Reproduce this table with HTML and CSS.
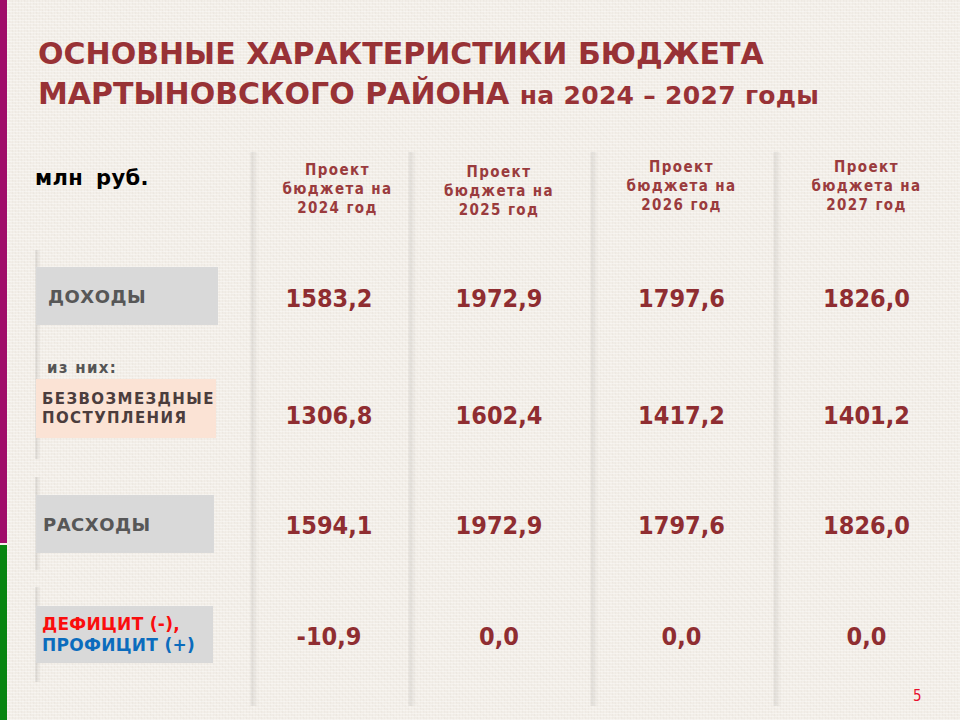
FILE: index.html
```html
<!DOCTYPE html>
<html lang="ru">
<head>
<meta charset="utf-8">
<title>Основные характеристики бюджета</title>
<link rel="stylesheet" href="styles.css">
</head>
<body>
<div class="slide">
  <div class="sidebar">
    <div class="bar-top"></div>
    <div class="bar-gap"></div>
    <div class="bar-bottom"></div>
  </div>
  <main class="main">
    <h1 class="title">ОСНОВНЫЕ ХАРАКТЕРИСТИКИ БЮДЖЕТА<br>МАРТЫНОВСКОГО РАЙОНА <span class="title-small">на 2024 – 2027 годы</span></h1>
    <div class="table">
      <div class="labels">
        <div class="unit">млн руб.</div>
        <div class="group group-income">
          <div class="box box-gray box-income"><span>ДОХОДЫ</span></div>
          <div class="sub">из них:</div>
          <div class="box box-peach"><span>БЕЗВОЗМЕЗДНЫЕ<br>ПОСТУПЛЕНИЯ</span></div>
        </div>
        <div class="group group-exp">
          <div class="box box-gray box-exp"><span>РАСХОДЫ</span></div>
        </div>
        <div class="group group-def">
          <div class="box box-gray box-def">
            <span class="red">ДЕФИЦИТ (-),</span>
            <span class="blue">ПРОФИЦИТ (+)</span>
          </div>
        </div>
      </div>
      <div class="col col-1">
        <div class="head head-1">Проект<br>бюджета на<br>2024 год</div>
        <div class="val r1">1583,2</div>
        <div class="val r2">1306,8</div>
        <div class="val r3">1594,1</div>
        <div class="val r4">-10,9</div>
      </div>
      <div class="col col-2">
        <div class="head head-2">Проект<br>бюджета на<br>2025 год</div>
        <div class="val r1">1972,9</div>
        <div class="val r2">1602,4</div>
        <div class="val r3">1972,9</div>
        <div class="val r4">0,0</div>
      </div>
      <div class="col col-3">
        <div class="head head-3">Проект<br>бюджета на<br>2026 год</div>
        <div class="val r1">1797,6</div>
        <div class="val r2">1417,2</div>
        <div class="val r3">1797,6</div>
        <div class="val r4">0,0</div>
      </div>
      <div class="col col-4">
        <div class="head head-3">Проект<br>бюджета на<br>2027 год</div>
        <div class="val r1">1826,0</div>
        <div class="val r2">1401,2</div>
        <div class="val r3">1826,0</div>
        <div class="val r4">0,0</div>
      </div>
    </div>
  </main>
  <div class="page-num">5</div>
</div>
</body>
</html>
```

FILE: styles.css
```css
* { box-sizing: border-box; }

html, body {
  margin: 0;
  padding: 0;
}

body {
  width: 960px;
  height: 720px;
  overflow: hidden;
  font-family: "DejaVu Sans", Verdana, sans-serif;
  background-color: #f3efe9;
  background-image:
    repeating-linear-gradient(0deg, rgba(255,255,255,0.35) 0 1px, rgba(255,255,255,0) 1px 3px),
    repeating-linear-gradient(90deg, rgba(120,100,80,0.035) 0 1px, rgba(0,0,0,0) 1px 3px),
    repeating-linear-gradient(45deg, rgba(150,130,110,0.02) 0 2px, rgba(0,0,0,0) 2px 5px);
}

.slide {
  position: relative;
  display: flex;
  width: 960px;
  height: 720px;
}

.sidebar {
  width: 7px;
  height: 720px;
  display: flex;
  flex-direction: column;
  flex-shrink: 0;
}

.bar-top { height: 543px; background: #a00c69; }
.bar-gap { height: 2px; background: #f4efe9; }
.bar-bottom { flex: 1; background: #078410; }

.main {
  flex: 1;
  padding-left: 28px;
}

.title {
  margin: 0 0 0 3px;
  padding-top: 34px;
  font-family: "DejaVu Sans", Verdana, sans-serif;
  font-weight: bold;
  font-size: 30px;
  line-height: 40px;
  color: #983236;
  white-space: nowrap;
}

.title-small {
  font-size: 25px;
  letter-spacing: 0.3px;
}

.table {
  display: flex;
  margin-top: 36px;
}

/* label column */
.labels {
  width: 215px;
  display: flex;
  flex-direction: column;
}

.unit {
  height: 98px;
  padding-top: 14px;
  font-family: "DejaVu Sans", Verdana, sans-serif;
  font-weight: bold;
  font-size: 21px;
  letter-spacing: 0.4px;
  word-spacing: 5px;
  color: #000;
}

.group {
  padding-left: 1px;
  background-image: linear-gradient(to right, rgba(0,0,0,0.03) 0, rgba(0,0,0,0.1) 1px, rgba(0,0,0,0.05) 3px, rgba(0,0,0,0) 6px);
}

.group-income { height: 209px; padding-top: 17px; }
.group-exp { height: 93px; margin-top: 18px; padding-top: 18px; }
.group-def { height: 95px; margin-top: 17px; padding-top: 19px; }

.box {
  display: flex;
  align-items: center;
  font-family: "DejaVu Sans", Verdana, sans-serif;
  font-weight: bold;
}

.box-gray { background: #d9d9d9; }
.box-peach { background: #fbe3d5; }

.box-income {
  width: 182px;
  height: 58px;
  padding-left: 12px;
  font-size: 18px;
  letter-spacing: 0.5px;
  color: #575757;
}

.sub {
  height: 54px;
  padding-top: 34px;
  padding-left: 11px;
  font-size: 15px;
  line-height: 18px;
  letter-spacing: 1.3px;
  font-weight: bold;
  color: #555;
}

.box-peach {
  width: 180px;
  height: 59px;
  padding-left: 6px;
  font-size: 15px;
  line-height: 19px;
  letter-spacing: 1.4px;
  color: #4b3d3d;
}

.box-exp {
  width: 178px;
  height: 58px;
  padding-left: 7px;
  font-size: 18px;
  letter-spacing: 0.5px;
  color: #575757;
}

.box-def {
  width: 177px;
  height: 57px;
  padding-left: 6px;
  flex-direction: column;
  align-items: flex-start;
  justify-content: center;
  font-size: 17px;
  line-height: 21px;
  letter-spacing: 0.3px;
}

.red { color: #fa0d0d; }
.blue { color: #0b6cbd; }

/* value columns */
.col {
  display: flex;
  flex-direction: column;
  background-image: linear-gradient(to right, rgba(0,0,0,0.02) 0, rgba(0,0,0,0.075) 2px, rgba(0,0,0,0.05) 4px, rgba(0,0,0,0.015) 7px, rgba(0,0,0,0) 9px);
}

.col-1 { width: 158px; }
.col-2 { width: 182px; }
.col-3 { width: 183px; }
.col-4 { width: 187px; }

.head {
  height: 98px;
  text-align: center;
  font-family: "DejaVu Sans Condensed", "DejaVu Sans", sans-serif;
  font-weight: bold;
  font-size: 15px;
  line-height: 19px;
  letter-spacing: 1.4px;
  color: #9a3b3d;
}

.head-1 { padding-top: 9px; padding-left: 17px; }
.head-2 { padding-top: 11px; }
.head-3 { padding-top: 6px; }

.val {
  display: flex;
  align-items: center;
  justify-content: center;
  font-family: "DejaVu Sans Condensed", "DejaVu Sans", sans-serif;
  font-weight: bold;
  font-size: 25px;
  color: #8f2d31;
}

.r1 { height: 96px; }
.r2 { height: 138px; }
.r3 { height: 82px; }
.r4 { height: 140px; }

.page-num {
  position: absolute;
  left: 913px;
  top: 687px;
  font-family: "DejaVu Sans Condensed", "DejaVu Sans", sans-serif;
  font-size: 15px;
  color: #e8112d;
}
```
